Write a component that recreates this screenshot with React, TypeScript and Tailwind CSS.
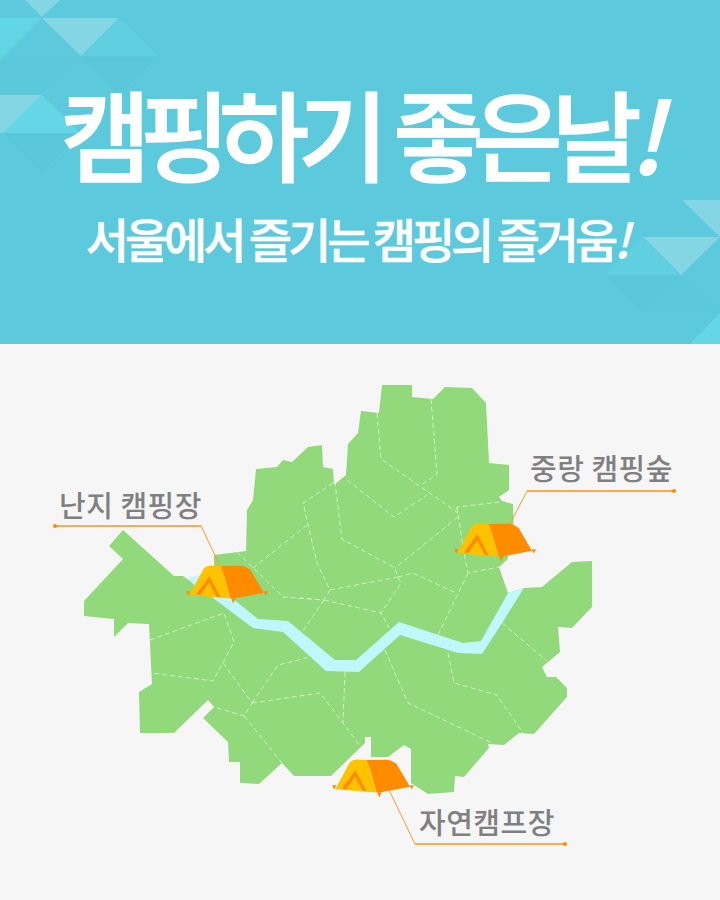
const cjk = "font-['Noto_Sans_CJK_KR','Noto_Sans',sans-serif]";

const outline =
  '109,546 123,530 174,576 183,576 193,583 214,590 214,555 246,551 247,510 253,500 256,469 277,467 283,460 292,462 308,447 322,445 323,467 333,469 334,485 346,475 348,444 358,433 361,411 379,413 382,385 412,385 412,397 433,399 445,387 472,388 486,403 489,463 509,465 509,490 499,497 502,501 513,504 514,540 507,560 499,567 508,593 524,588 542,587 572,562 592,561 592,607 572,628 558,627 560,652 542,667 547,677 556,677 567,688 567,697 534,734 519,733 504,745 488,744 489,748 464,777 455,776 454,792 428,794 411,783 411,749 404,745 388,757 371,757 371,737 365,737 365,743 331,776 294,776 282,763 259,784 240,783 240,762 229,762 228,742 203,718 214,707 208,700 174,733 140,733 139,692 152,684 149,624 128,623 114,637 114,619 84,616 84,601 123,559';

const river =
  '188,578 200,575 237,602 258,619 288,621 335,660 356,660 399,622 463,643 481,641 508,593 524,588 502,623 482,654 458,653 400,635 359,672 326,671 283,632 253,628 213,598 193,584';

// district borders, page coordinates
const borders = [
  '150,640 224,613 234,642 213,681 152,673',
  '223,663 252,703 244,716 214,707',
  '252,703 278,665 310,657',
  '252,703 320,693 343,723 360,746',
  '345,672 343,723',
  '244,716 282,763',
  '237,552 283,597 324,600',
  '253,568 307,525',
  '333,483 303,503 317,563 330,590 398,577 395,568 342,539 335,483',
  '330,590 324,600 300,598',
  '324,600 302,632',
  '347,480 394,517 427,495',
  '377,413 381,459 458,513 457,507 500,502',
  '431,399 437,474 420,486',
  '458,517 395,568',
  '457,507 463,547 468,573 499,567',
  '468,573 438,635',
  '398,577 413,573 456,593',
  '398,577 401,583 381,613 389,628',
  '324,600 381,613',
  '502,623 547,661',
  '448,653 454,683 497,695 523,733',
  '385,650 408,703 492,743',
];

function Tent({ x, y }: { x: number; y: number }) {
  return (
    <svg x={x} y={y} width="82" height="39" viewBox="0 0 245 116">
      <polygon points="0,78 13,78 7,91" fill="#ff8c00" />
      <polygon points="135,99 148,99 141,115" fill="#ff8c00" />
      <polygon points="232,78 245,78 238,91" fill="#ff8c00" />
      <path d="M103 3 L163 2 Q182 4 193 15 L233 83 L143 100 L133 100 L115 35 Z" fill="#ff8c00" />
      <path d="M10 90 L53 10 Q62 1 73 1 L103 3 L115 35 L133 100 Z" fill="#ffc200" />
      <path d="M30 88 L70 33 L103 96 L92 95 L69 52 L43 90 Z" fill="#ff8c00" />
    </svg>
  );
}

function Label({ children, className }: { children: string; className: string }) {
  return (
    <span className={`absolute ${cjk} text-[29px] leading-none font-medium tracking-[0.5px] text-[#808080] whitespace-nowrap ${className}`}>
      {children}
    </span>
  );
}

export default function App() {
  return (
    <div className="w-[720px] h-[900px] overflow-hidden bg-[#f6f6f6]">
      <header className="relative h-[344px] bg-[#5dc9dc] overflow-hidden">
        <svg className="absolute inset-0" width="720" height="344" viewBox="0 0 720 344">
          <polygon points="25,0 60,0 42,17" fill="#fff" fillOpacity="0.25" />
          <polygon points="42,18 119,18 81,56" fill="#fff" fillOpacity="0.25" />
          <polygon points="119,18 158,56 81,56" fill="#60cfe0" />
          <polygon points="0,18 42,18 0,60" fill="#62d6e4" />
          <polygon points="80,57 158,57 118,95" fill="#59c6da" />
          <polygon points="0,60 80,57 42,95 0,95" fill="#5bc8db" />
          <polygon points="0,95 42,95 3,133 0,133" fill="#fff" fillOpacity="0.25" />
          <polygon points="42,95 80,133 3,133" fill="#65d6e5" />
          <polygon points="3,133 80,133 42,172" fill="#59c6da" />
          <polygon points="682,200 720,200 720,237" fill="#fff" fillOpacity="0.25" />
          <polygon points="643,237 720,237 681,275" fill="#fff" fillOpacity="0.25" />
          <polygon points="643,237 681,275 605,275" fill="#60cfe0" />
          <polygon points="605,275 681,275 643,313" fill="#59c6da" />
          <polygon points="681,275 720,313 643,313" fill="#5bc8db" />
          <polygon points="720,313 720,344 690,344" fill="#65d6e5" />
        </svg>
        <div className={`relative flex flex-col items-center pt-[70px] text-white ${cjk}`}>
          <h1 className="text-[98px] leading-[122px] font-medium [-webkit-text-stroke:1.5px_white] tracking-[-11px] [word-spacing:5px] whitespace-nowrap pl-[4px]">
            캠핑하기 좋은날<span className="italic tracking-normal ml-[-1px]">!</span>
          </h1>
          <p className="mt-[16px] text-[47px] leading-[60px] font-medium [-webkit-text-stroke:0.5px_white] tracking-[-4.1px] whitespace-nowrap pr-[4px]">
            서울에서 즐기는 캠핑의 즐거움<span className="italic tracking-normal">!</span>
          </p>
        </div>
      </header>

      <main className="relative h-[556px]">
        <svg className="block" width="720" height="556" viewBox="0 344 720 556">
          <polygon points="680,344 720,344 720,380" fill="#fff" fillOpacity="0.12" />
          <polygon points={outline} fill="#91d97a" />
          {borders.map((points) => (
            <polyline
              key={points}
              points={points}
              fill="none"
              stroke="#d4efc8"
              strokeWidth="1"
              strokeDasharray="5 3"
            />
          ))}
          <polygon points={river} fill="#c2f6fd" />

          <g fill="none" stroke="#ffab4d" strokeWidth="2">
            <path d="M55 526 H201" />
            <path d="M527 491 H674" />
            <path d="M415 844 H565" />
          </g>
          <g fill="none" stroke="#ff9a2a" strokeWidth="1">
            <path d="M201 526 L222 570" />
            <path d="M527 491 L509 526" />
            <path d="M389 790 L415 844" />
          </g>
          <circle cx="55" cy="526" r="2" fill="#ff8c00" />
          <circle cx="674" cy="491" r="2" fill="#ff8c00" />
          <circle cx="565" cy="844" r="2" fill="#ff8c00" />

          <Tent x={186} y={565} />
          <Tent x={454} y={523} />
          <Tent x={332} y={759} />
        </svg>

        <Label className="left-[59px] top-[146px]">난지 캠핑장</Label>
        <Label className="left-[530px] top-[109px]">중랑 캠핑숲</Label>
        <Label className="left-[419px] top-[463px]">자연캠프장</Label>
      </main>
    </div>
  );
}
